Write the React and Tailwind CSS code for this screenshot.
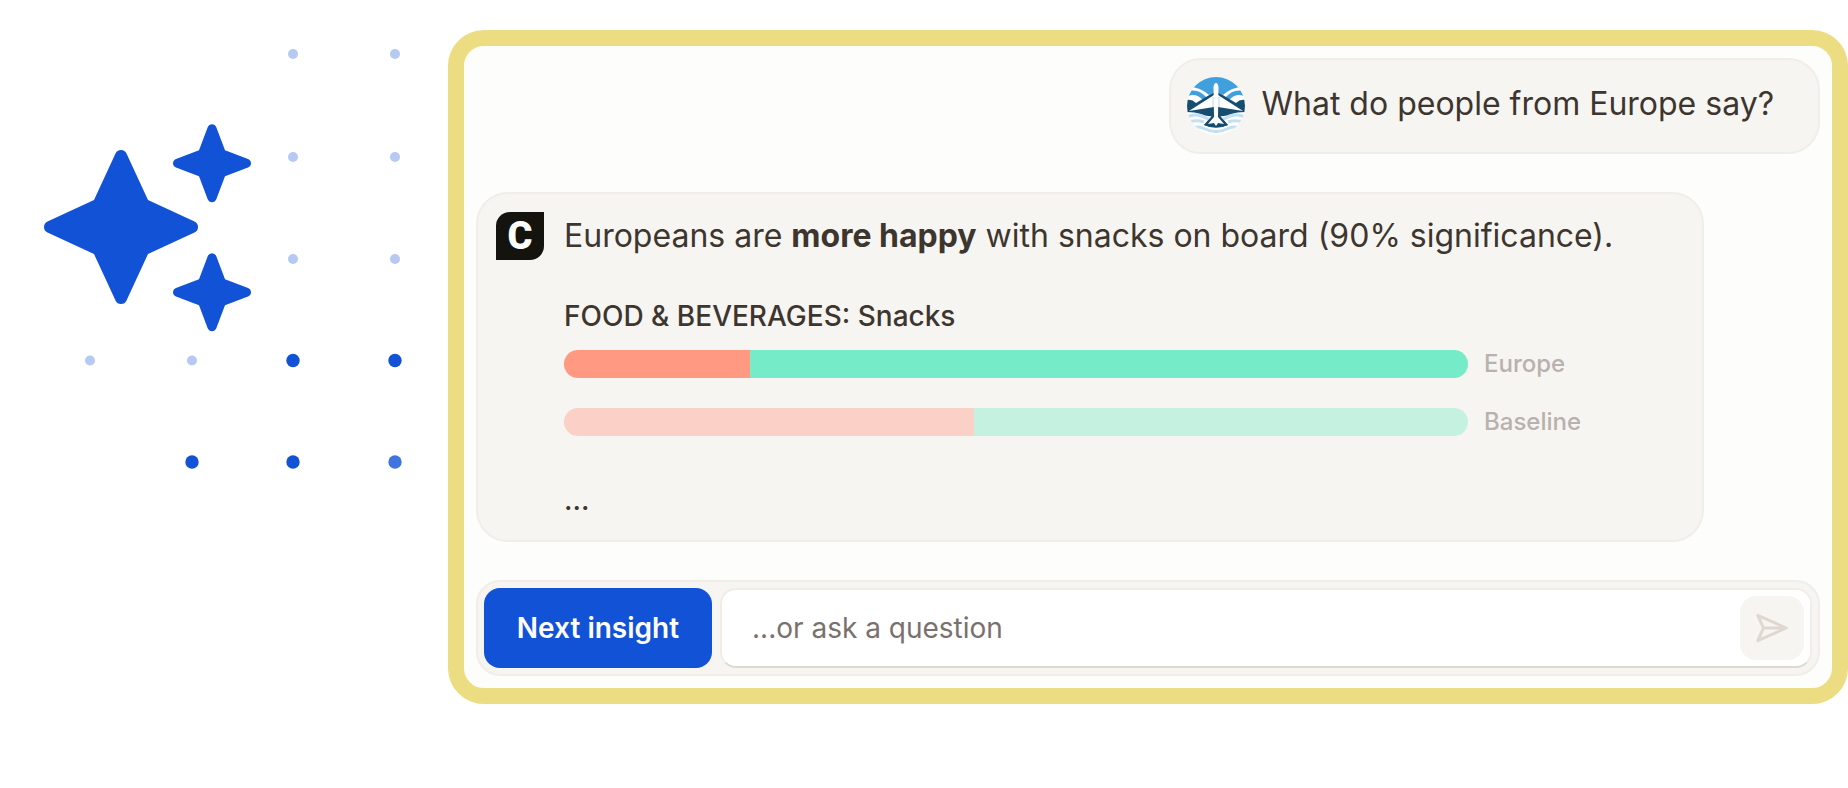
const dots = [
  { x: 293, y: 54 },
  { x: 395, y: 54 },
  { x: 293, y: 157 },
  { x: 395, y: 157 },
  { x: 293, y: 259 },
  { x: 395, y: 259 },
  { x: 90, y: 360.5 },
  { x: 192, y: 360.5 },
];

const boldDots = [
  { x: 293, y: 360.5 },
  { x: 395, y: 360.5 },
  { x: 192, y: 462 },
  { x: 293, y: 462 },
  { x: 395, y: 462, faded: true },
];

const bars = [
  { label: 'Europe', negative: 20.6, red: 'bg-[#ff9982]', green: 'bg-[#76ebc8]' },
  { label: 'Baseline', negative: 45.4, red: 'bg-[#fbd0c6]', green: 'bg-[#c5f1e1]' },
];

function Sparkles() {
  return (
    <svg viewBox="0 0 448 500" className="w-[448px] shrink-0 self-start" fill="#1252d6" aria-hidden="true">
      {dots.map((d) => (
        <circle key={`${d.x}-${d.y}`} cx={d.x} cy={d.y} r="5" fill="#b6c9f2" />
      ))}
      {boldDots.map((d) => (
        <circle key={`${d.x}-${d.y}`} cx={d.x} cy={d.y} r="6.7" fill={d.faded ? '#4075df' : '#1252d6'} />
      ))}
      <path d="M115.5 153.5Q117 150 121 150Q125 150 126.5 153.5L148 200L194.5 221.5Q198 223 198 227Q198 231 194.5 232.5L148 254L126.5 300.5Q125 304 121 304Q117 304 115.5 300.5L94 254L47.5 232.5Q44 231 44 227Q44 223 47.5 221.5L94 200Z" />
      <Star y={163.2} />
      <Star y={292.2} />
    </svg>
  );
}

function Star({ y }) {
  return (
    <path
      transform={`translate(212 ${y})`}
      d="M-4.3 -36Q-3 -39 0 -39Q3 -39 4.3 -36L13 -13L36 -4.3Q39 -3 39 0Q39 3 36 4.3L13 13L4.3 36Q3 39 0 39Q-3 39 -4.3 36L-13 13L-36 4.3Q-39 3 -39 0Q-39 -3 -36 -4.3L-13 -13Z"
    />
  );
}

function PlaneAvatar() {
  return (
    <svg viewBox="0 0 58 58" className="size-[58px] shrink-0" role="img" aria-label="Airline">
      <defs>
        <clipPath id="avatar">
          <circle cx="29" cy="29" r="29" />
        </clipPath>
      </defs>
      <g clipPath="url(#avatar)">
        <rect width="58" height="58" fill="#fff" />
        <path d="M0 0H58V10Q46 9 36 18L29 14L22 18Q12 9 0 10Z" fill="#3fa0dd" />
        <path d="M0 17Q10 13 18 22M58 17Q48 13 40 22" fill="none" stroke="#3fa0dd" strokeWidth="4.6" />
        <path d="M0 23Q5 22 9 26L29 14L49 26Q53 22 58 23V35Q50 35 44 37Q36 40 33 39L41 48Q29 53 17 48L25 39Q22 40 14 37Q8 35 0 35Z" fill="#174d70" />
        <path d="M0 40Q9 36 17 40T23 41M0 46Q8 42 17 45M58 40Q49 36 41 40T35 41M58 46Q50 42 41 45M3 52Q11 48 18 52Q29 57 40 52Q47 48 55 52" fill="none" stroke="#c3dff2" strokeWidth="3" />
        <path d="M25 39L17 48Q29 53 41 48L33 39Z" fill="#174d70" />
        <path d="M2 34L27 18H31L56 34L31 30H27Z" fill="#fff" />
        <path d="M26.5 10Q27 6 29 6Q31 6 31.5 10L31 40L37 47L31 46L29 49L27 46L21 47L27 40Z" fill="#fff" />
        <path d="M26 20V30M32 20V30" stroke="#c3dff2" strokeWidth="1.2" />
      </g>
    </svg>
  );
}

function Question() {
  return (
    <div className="flex h-24 items-center gap-4 self-end rounded-[32px] border-2 border-[#f1eee9] bg-[#f7f5f2] pr-11 pl-4">
      <PlaneAvatar />
      <p className="pb-1 text-[32px] leading-10">What do people from Europe say?</p>
    </div>
  );
}

function Answer() {
  return (
    <div className="mt-[38px] mr-[116px] flex gap-5 rounded-[32px] border-2 border-[#f1eee9] bg-[#f7f5f2] pt-[18px] pr-[88px] pb-5 pl-[18px]">
      <div className="flex size-12 shrink-0 items-center justify-center rounded-tl-[14px] rounded-br-[14px] bg-[#14130e] font-[Roboto,sans-serif] text-[38px] leading-none font-black text-white">
        C
      </div>
      <div className="min-w-0 flex-1">
        <p className="pt-1 text-[32px] leading-10">
          Europeans are <strong className="font-bold">more happy</strong> with snacks on board (90% significance).
        </p>
        <h2 className="mt-10 text-[28px] leading-10 font-medium">FOOD &amp; BEVERAGES: Snacks</h2>
        <ul className="mt-[14px] flex flex-col gap-[30px]">
          {bars.map((bar) => (
            <li key={bar.label} className="flex h-7 items-center gap-4">
              <div className="flex h-7 flex-1 overflow-hidden rounded-full">
                <div className={bar.red} style={{ width: `${bar.negative}%` }} />
                <div className={`flex-1 ${bar.green}`} />
              </div>
              <span className="w-[130px] text-2xl leading-7 font-medium text-[#b8b1ad]">{bar.label}</span>
            </li>
          ))}
        </ul>
        <p className="mt-11 text-[28px] leading-10 font-medium">...</p>
      </div>
    </div>
  );
}

function AskBar() {
  return (
    <form className="mt-[38px] flex gap-2 rounded-[24px] border-2 border-[#f1eee9] bg-[#f7f5f2] p-[6px]" onSubmit={(e) => e.preventDefault()}>
      <button type="button" className="h-20 w-[228px] shrink-0 rounded-2xl bg-[#1252d6] text-[28px] leading-9 font-semibold text-white">
        Next insight
      </button>
      <div className="flex h-20 flex-1 items-center rounded-2xl border-2 border-[#f1ede6] border-b-[#e0d8cf] bg-white pr-[6px] pl-[30px]">
        <input
          type="text"
          aria-label="Ask a question"
          placeholder="...or ask a question"
          className="min-w-0 flex-1 text-[28px] leading-9 outline-none placeholder:text-[#7a716e]"
        />
        <button type="submit" aria-label="Send" className="flex size-16 items-center justify-center rounded-2xl bg-[#f7f5f2]">
          <svg viewBox="0 0 32 32" className="size-8" fill="none" stroke="#e0d8cf" strokeWidth="3" strokeLinecap="round" strokeLinejoin="round">
            <path d="M1.8 3.4L30.3 16L1.8 28.6L7.5 16ZM7.5 16H30" />
          </svg>
        </button>
      </div>
    </form>
  );
}

export default function App() {
  return (
    <main className="flex items-start bg-white font-[Inter,sans-serif] text-[#3d362f]">
      <Sparkles />
      <section className="mt-[30px] flex flex-1 flex-col rounded-[36px] border-16 border-[#ecdc82] bg-[#fdfdfb] p-3">
        <Question />
        <Answer />
        <AskBar />
      </section>
    </main>
  );
}
